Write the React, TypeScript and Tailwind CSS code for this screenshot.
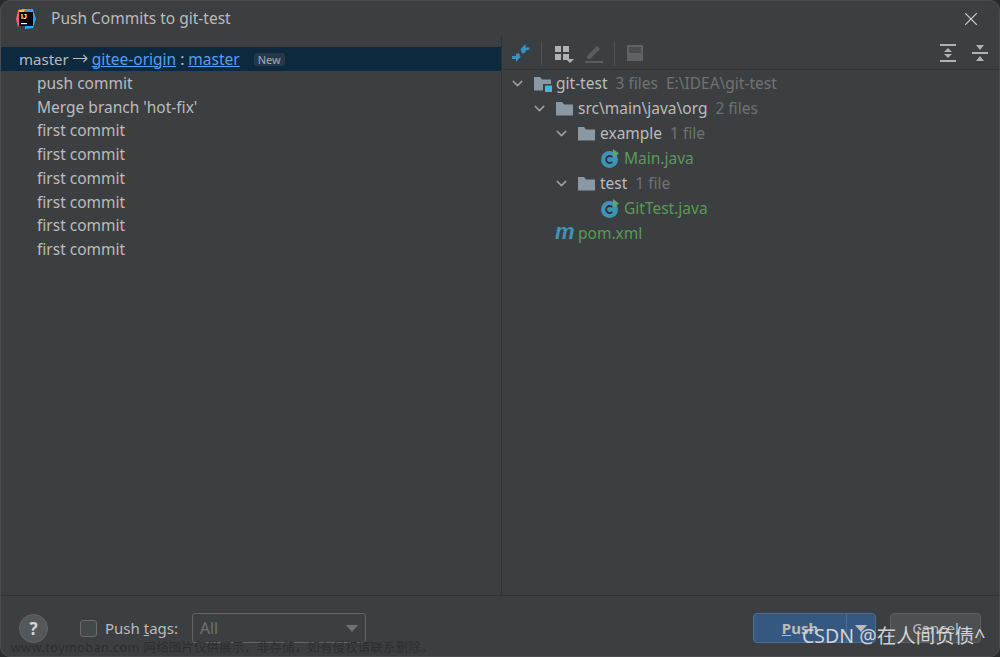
import { ChevronDown, X } from "lucide-react";

const commits = [
  "push commit",
  "Merge branch 'hot-fix'",
  "first commit",
  "first commit",
  "first commit",
  "first commit",
  "first commit",
  "first commit",
];

function Chevron() {
  return <ChevronDown size={17} strokeWidth={2} className="text-[#9da0a2] shrink-0" />;
}

function Folder({ big }: { big?: boolean }) {
  return (
    <svg width="19" height="17" viewBox="0 0 19 17" className="shrink-0">
      <path d="M1 2h6l2 2.5h9v11H1z" fill="#8a98a3" />
      {big && <rect x="10" y="9" width="9" height="8" fill="#3c3f41" />}
      {big && <rect x="12" y="10.500" width="7" height="6.500" fill="#40b6e0" />}
    </svg>
  );
}

function JavaIcon() {
  return (
    <svg width="20" height="20" viewBox="0 0 20 20" className="shrink-0">
      <circle cx="9.500" cy="10.500" r="8.500" fill="#3f93b5" />
      <path d="M12.300 8.200a3.500 3.500 0 1 0 0 4.600" fill="none" stroke="#2b3336" strokeWidth="1.800" />
      <path d="M13 0l6 4.500-6 4.500z" fill="#59a869" />
    </svg>
  );
}

function TreeRow({
  indent,
  icon,
  label,
  labelClass,
  meta,
  chevron = true,
}: {
  indent: string;
  icon: React.ReactNode;
  label: string;
  labelClass?: string;
  meta?: string;
  chevron?: boolean;
}) {
  return (
    <div className={`h-[25px] flex items-center ${indent}`}>
      {chevron && <Chevron />}
      <div className={chevron ? "ml-[7px]" : ""}>{icon}</div>
      <span className={`ml-[4px] ${labelClass ?? "text-[#bbbbbb]"}`}>{label}</span>
      {meta && <span className="ml-[8px] text-[#6f7274] whitespace-pre">{meta}</span>}
    </div>
  );
}

export default function App() {
  return (
    <div className="w-[1000px] h-[657px] bg-[#2a2b2c] overflow-hidden relative font-['Noto_Sans','Open_Sans',sans-serif] text-[15.500px] leading-none">
      <div className="h-full rounded-[10px] bg-[#3c3f41] flex flex-col border border-[#4a4c4e]">
        <div className="h-[35px] shrink-0 flex items-center pl-[14px] pr-[20px]">
          <svg width="22" height="22" viewBox="0 0 22 22" className="shrink-0">
            <path d="M3 3l8-1 1 8-9 9-2-8z" fill="#fc5c8a" />
            <path d="M10 1h8l3 10-3 9-8 1z" fill="#2aa5e8" />
            <path d="M3 2l7-1-2 6z" fill="#f8c73a" />
            <rect x="4" y="4" width="14" height="14" fill="#000" />
            <rect x="6" y="15" width="6" height="1.200" fill="#fff" />
            <text x="6" y="11" fill="#fff" fontSize="7" fontWeight="700" fontFamily="Liberation Sans">IJ</text>
          </svg>
          <span className="ml-[14px] text-[#bbbbbb]">Push Commits to git-test</span>
          <X size={22} strokeWidth={1.200} className="ml-auto -mr-[3px] text-[#c4c6c8]" />
        </div>

        <div className="flex-1 flex min-h-0">
          <div className="w-[500px] shrink-0 pt-[11px]">
            <div className="h-[24px] bg-[#0d293e] flex items-center pl-[18px] pt-[1px] text-[#bbbbbb]">
              <span className="text-[15px]">master</span>
              <svg width="15" height="9" viewBox="0 0 15 9" className="ml-[4px] mr-[4px] -mt-[3px] shrink-0">
                <path d="M0 4.500h14M10.500 1l3.500 3.500-3.500 3.500" fill="none" stroke="#bbbbbb" strokeWidth="1.100" />
              </svg>
              <span className="text-[#589df6] underline">gitee-origin</span>
              <span className="mx-[4px]">:</span>
              <span className="text-[#589df6] underline">master</span>
              <span className="ml-[14px] h-[13px] px-[4px] rounded-[3px] bg-[#25384a] text-[11px] flex items-center text-[#a4aab0]">New</span>
            </div>
            <div className="pt-[1px]">
              {commits.map((commit, i) => (
                <div key={i} className="h-[23.700px] flex items-center pl-[36px] text-[#bbbbbb]">
                  {commit}
                </div>
              ))}
            </div>
          </div>

          <div className="flex-1 border-l border-[#323232] flex flex-col">
            <div className="h-[34px] shrink-0 flex items-center border-b border-[#323232] pl-[9px] pr-[10px]">
              <svg width="20" height="20" viewBox="0 0 20 20" className="shrink-0">
                <path d="M18.500 4.500H14.500V1L9.500 6l1.500 4.500 3.500-1V7.500l4-1z" fill="#3592c4" />
                <path d="M1 13h4v-2l3-1 1.500 4-4.500 5v-3H1z" fill="#3592c4" />
              </svg>
              <div className="w-px h-[24px] bg-[#4f5254] ml-[10px]" />
              <svg width="20" height="20" viewBox="0 0 20 20" className="ml-[12px] shrink-0">
                <path d="M1 3h6v6H1zM9 3h6v6H9zM1 11h6v6H1z" fill="#afb1b3" />
                <path d="M9 11h6v6H9z" fill="#afb1b3" />
                <path d="M12 16h8l-4 4z" fill="#afb1b3" />
              </svg>
              <svg width="20" height="20" viewBox="0 0 20 20" className="ml-[10px] shrink-0">
                <path d="M3 13L13 3l3 3L6 16H3z" fill="#5a5d5f" />
                <rect x="1" y="18" width="18" height="2" fill="#5a5d5f" />
              </svg>
              <div className="w-px h-[24px] bg-[#4f5254] ml-[10px]" />
              <svg width="18" height="18" viewBox="0 0 18 18" className="ml-[11px] shrink-0">
                <path d="M1 1h16v16H1z" fill="#5f6264" />
                <path d="M3 3h12v6H3z" fill="#4a4c4e" />
              </svg>
              <svg width="18" height="20" viewBox="0 0 18 20" className="ml-auto shrink-0">
                <path d="M1 1h16v2H1zM1 17h16v2H1z" fill="#afb1b3" />
                <path d="M9 5l4 4H5zM9 15l-4-4h8z" fill="#afb1b3" />
              </svg>
              <svg width="18" height="20" viewBox="0 0 18 20" className="ml-[14px] shrink-0">
                <path d="M1 9h16v2H1z" fill="#afb1b3" />
                <path d="M5 2h8l-4 5zM9 13l4 5H5z" fill="#afb1b3" />
              </svg>
            </div>
            <div className="pt-[1px]">
              <TreeRow indent="pl-[7px]" icon={<Folder big />} label="git-test" meta="3 files  E:\IDEA\git-test" />
              <TreeRow indent="pl-[29px]" icon={<Folder />} label="src\main\java\org" meta="2 files" />
              <TreeRow indent="pl-[51px]" icon={<Folder />} label="example" meta="1 file" />
              <TreeRow indent="pl-[98px]" chevron={false} icon={<JavaIcon />} label="Main.java" labelClass="text-[#5a9a55]" />
              <TreeRow indent="pl-[51px]" icon={<Folder />} label="test" meta="1 file" />
              <TreeRow indent="pl-[98px]" chevron={false} icon={<JavaIcon />} label="GitTest.java" labelClass="text-[#5a9a55]" />
              <TreeRow
                indent="pl-[53px]"
                chevron={false}
                icon={
                  <span className="block w-[19px] text-[22px] font-bold italic text-[#3f93b5] font-['Liberation_Sans',sans-serif] -mt-[4px]">m</span>
                }
                label="pom.xml"
                labelClass="text-[#5a9a55]"
              />
            </div>
          </div>
        </div>

        <div className="h-[61px] shrink-0 border-t border-[#323232] flex items-center pl-[18px] pr-[18px] pt-[4px]">
          <div className="w-[29px] h-[29px] rounded-full bg-[#55585a] border border-[#626567] flex items-center justify-center text-[#d4d6d8] font-bold text-[17px]">?</div>
          <div className="ml-[32px] w-[17px] h-[17px] rounded-[3px] bg-[#43494a] border border-[#6b6b6b]" />
          <span className="ml-[8px] text-[15px] text-[#bbbbbb]">Push <span className="underline">t</span>ags:</span>
          <div className="ml-[14px] w-[174px] h-[30px] rounded-[3px] border border-[#646464] flex items-center pl-[7px] pr-[7px] pt-[1px] text-[#6f7274]">
            All
            <svg width="12" height="7" viewBox="0 0 12 7" className="ml-auto">
              <path d="M0 0h12L6 7z" fill="#6f7274" />
            </svg>
          </div>
          <div className="ml-auto w-[123px] h-[30px] rounded-[4px] bg-[#365880] border border-[#4c708c] flex items-center text-[15px] text-[#bbbbbb] font-bold">
            <div className="flex-1 text-center"><span className="underline">P</span>ush</div>
            <div className="w-[29px] h-full border-l border-[#4c708c] flex items-center justify-center">
              <svg width="12" height="7" viewBox="0 0 12 7">
                <path d="M0 0h12L6 7z" fill="#bbbbbb" />
              </svg>
            </div>
          </div>
          <div className="ml-[14px] w-[91px] h-[30px] rounded-[4px] bg-[#4c5052] border border-[#5e6060] flex items-center justify-center text-[15px] text-[#bbbbbb]">Cancel</div>
        </div>
      </div>

      <div className="absolute left-[11px] top-[642px] text-[12.500px] tracking-[0.500px] text-[#2c2e30] whitespace-nowrap font-['Noto_Sans','Noto_Sans_CJK_SC',sans-serif]">
        www.toymoban.com <span className="tracking-[0.100px]">网络图片仅供展示，非存储，如有侵权请联系删除。</span>
      </div>
      <div className="absolute left-[802px] top-[626px] text-[19.500px] text-[#d0d2d4] whitespace-nowrap font-['Noto_Sans','Noto_Sans_CJK_SC',sans-serif]">
        CSDN @在人间负债^
      </div>
    </div>
  );
}
